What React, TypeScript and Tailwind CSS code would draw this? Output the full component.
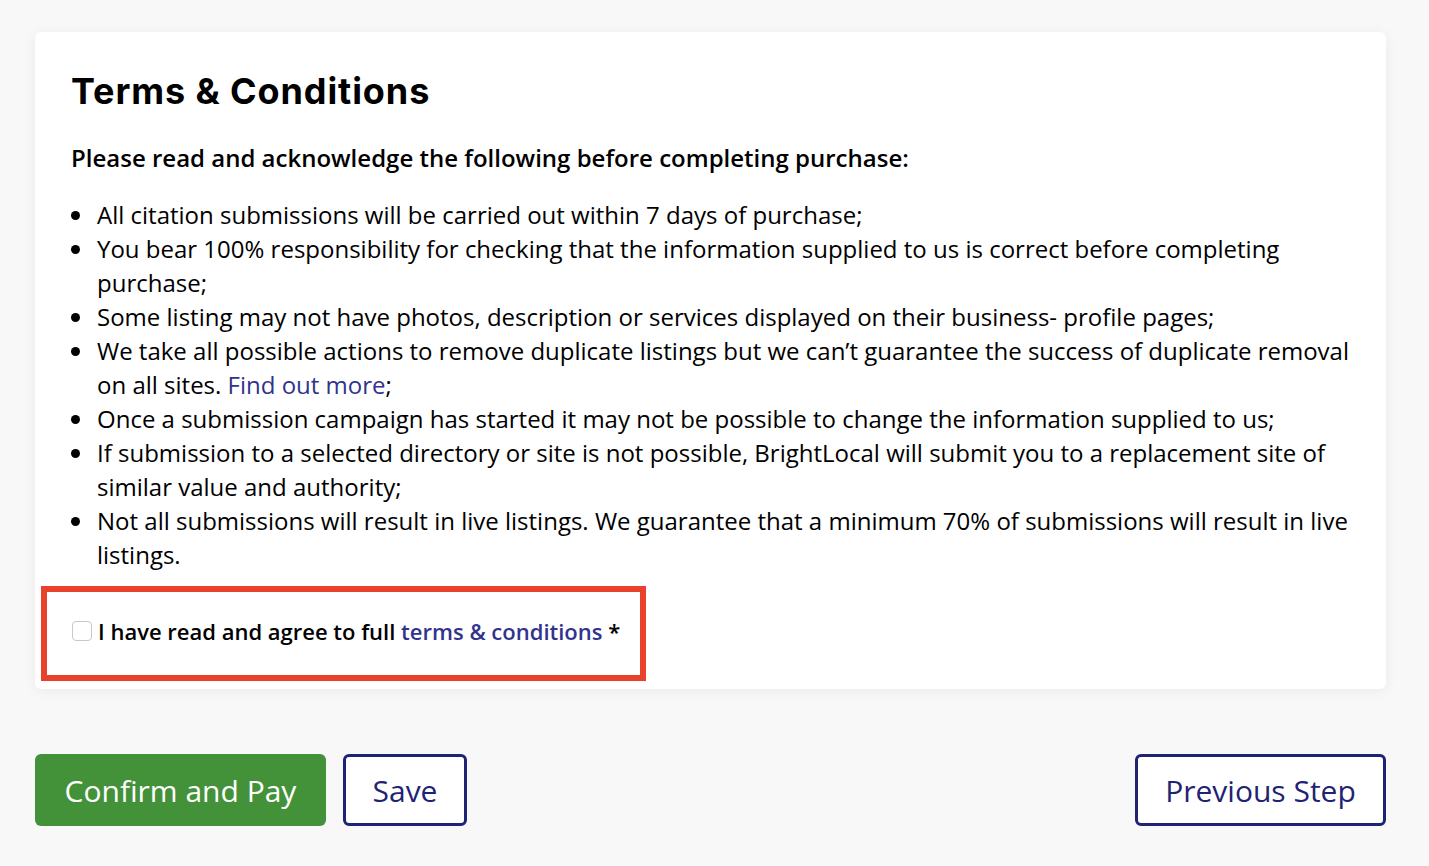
const items: React.ReactNode[] = [
  'All citation submissions will be carried out within 7 days of purchase;',
  'You bear 100% responsibility for checking that the information supplied to us is correct before completing purchase;',
  'Some listing may not have photos, description or services displayed on their business- profile pages;',
  <>
    We take all possible actions to remove duplicate listings but we can’t guarantee the success of duplicate removal
    on all sites. <a className="text-[#31338c]">Find out more</a>;
  </>,
  'Once a submission campaign has started it may not be possible to change the information supplied to us;',
  'If submission to a selected directory or site is not possible, BrightLocal will submit you to a replacement site of similar value and authority;',
  'Not all submissions will result in live listings. We guarantee that a minimum 70% of submissions will result in live listings.',
]

export default function App() {
  return (
    <div className="min-h-[866px] bg-[#f8f8f9] pt-[32px] pl-[35px] pr-[43px] font-['Open_Sans',sans-serif] text-black">
      <div className="rounded-md bg-white px-[36px] pt-[38px] pb-[8px] shadow-[0_2px_14px_rgba(0,0,0,0.06)]">
        <h1 className="font-['Inter',sans-serif] text-[36px] leading-[42px] font-bold tracking-[0.9px]">
          Terms &amp; Conditions
        </h1>

        <p className="mt-[29px] text-[24px] leading-[34px] font-semibold">
          Please read and acknowledge the following before completing purchase:
        </p>

        <ul className="mt-[23px] text-[24px] leading-[34px]">
          {items.map((item, i) => (
            <li key={i} className="flex">
              <span className="flex w-[26px] shrink-0 pt-[13px]">
                <span className="h-[9px] w-[9px] rounded-full bg-black" />
              </span>
              <span>{item}</span>
            </li>
          ))}
        </ul>

        <div className="-ml-[30px] mt-[14px] w-fit border-[6px] border-[#e8412c] pl-[25px] pr-[20px] pt-[25px] pb-[30px]">
          <label className="flex items-center gap-[6px] whitespace-nowrap text-[22px] leading-[28px] font-semibold">
            <span className="h-[20px] w-[20px] shrink-0 rounded-[4px] border border-[#c8c8c8] bg-white" />
            <span>
              I have read and agree to full <a className="text-[#31338c]">terms &amp; conditions</a> *
            </span>
          </label>
        </div>
      </div>

      <div className="mt-[65px] flex items-center justify-between">
        <div className="flex gap-[17px]">
          <button className="h-[72px] w-[291px] rounded-[6px] bg-[#43923a] text-[30px] text-white">
            Confirm and Pay
          </button>
          <button className="h-[72px] w-[124px] rounded-[6px] border-[3px] border-[#1f2373] bg-white text-[30px] text-[#1f2373]">
            Save
          </button>
        </div>
        <button className="h-[72px] w-[251px] rounded-[6px] border-[3px] border-[#1f2373] bg-white text-[30px] text-[#1f2373]">
          Previous Step
        </button>
      </div>
    </div>
  )
}
